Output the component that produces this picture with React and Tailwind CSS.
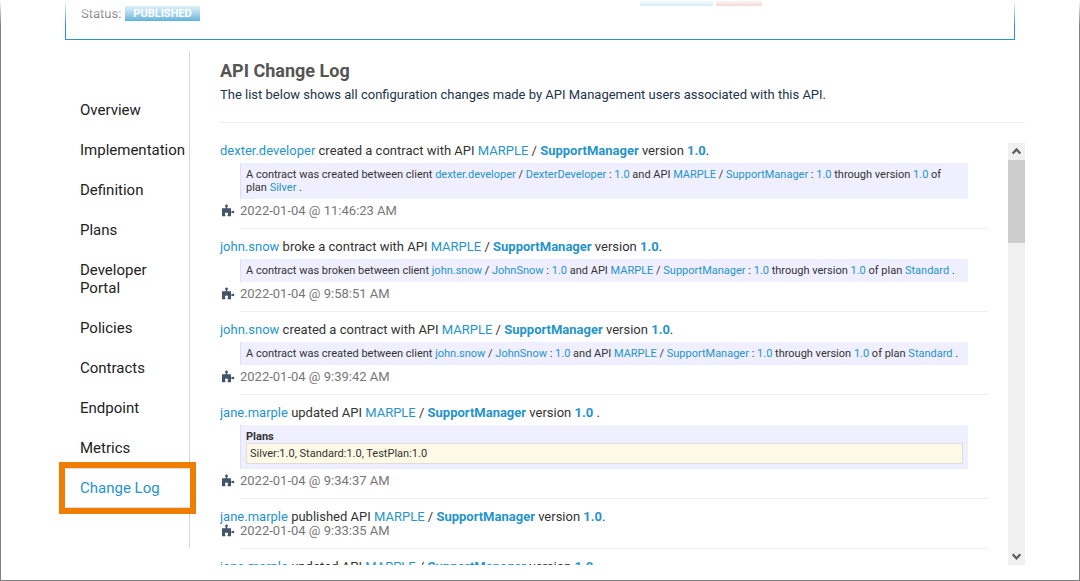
const navItems = [
  "Overview",
  "Implementation",
  "Definition",
  "Plans",
  "Developer Portal",
  "Policies",
  "Contracts",
  "Endpoint",
  "Metrics",
  "Change Log",
];

function Link({ children, bold }) {
  return (
    <a href="#" className={bold ? "font-bold text-[#2694ca]" : "text-[#2694ca]"}>
      {children}
    </a>
  );
}

function ContractDetail({ verb, user, client, plan }) {
  return (
    <p>
      A contract was {verb} between client <Link>{user}</Link> / <Link>{client}</Link> : <Link>1.0</Link> and API{" "}
      <Link>MARPLE</Link> / <Link>SupportManager</Link> : <Link>1.0</Link> through version <Link>1.0</Link> of plan{" "}
      <Link>{plan}</Link> .
    </p>
  );
}

function PlansDetail() {
  return (
    <div>
      <div className="font-bold">Plans</div>
      <div className="border border-[#dddddd] bg-[#fff9e6] p-[3px]">Silver:1.0, Standard:1.0, TestPlan:1.0</div>
    </div>
  );
}

const entries = [
  {
    user: "dexter.developer",
    action: "created a contract with API",
    end: ".",
    time: "2022-01-04 @ 11:46:23 AM",
    detail: <ContractDetail verb="created" user="dexter.developer" client="DexterDeveloper" plan="Silver" />,
  },
  {
    user: "john.snow",
    action: "broke a contract with API",
    end: ".",
    time: "2022-01-04 @ 9:58:51 AM",
    detail: <ContractDetail verb="broken" user="john.snow" client="JohnSnow" plan="Standard" />,
  },
  {
    user: "john.snow",
    action: "created a contract with API",
    end: ".",
    time: "2022-01-04 @ 9:39:42 AM",
    detail: <ContractDetail verb="created" user="john.snow" client="JohnSnow" plan="Standard" />,
  },
  {
    user: "jane.marple",
    action: "updated API",
    end: " .",
    time: "2022-01-04 @ 9:34:37 AM",
    detail: <PlansDetail />,
  },
  {
    user: "jane.marple",
    action: "published API",
    end: ".",
    time: "2022-01-04 @ 9:33:35 AM",
  },
  {
    user: "jane.marple",
    action: "updated API",
    end: " .",
  },
];

function PuzzleIcon() {
  return (
    <svg viewBox="0 0 13 14" className="h-[14px] w-[13px]" fill="#44546a" aria-hidden="true">
      <path d="M0 4.2H3.4C4 4.2 4 3.4 3.5 2.9C2.6 1.8 3.3 .6 4.5 .6S6.4 1.8 5.5 2.9C5 3.4 5 4.2 5.6 4.2H9V6.9C9 7.5 9.5 7.6 10 7.2C11 6.3 12.3 6.7 12.3 7.9S11 9.6 10 8.8C9.5 8.4 9 8.5 9 9.1V12.2H6.2C5.5 12.2 5.4 11.6 5.7 11C6.5 9.6 5.9 8.4 4.5 8.4S2.5 9.6 3.3 11C3.6 11.6 3.5 12.2 2.8 12.2H0Z" />
    </svg>
  );
}

function Entry({ user, action, end, time, detail }) {
  return (
    <li>
      <p className="text-[13px] leading-[14px] text-[#333333]">
        <Link>{user}</Link> {action} <Link>MARPLE</Link> / <Link bold>SupportManager</Link> version{" "}
        <Link bold>1.0</Link>
        {end}
      </p>
      {detail && (
        <div className="my-[5px] mr-5 ml-5 border-l border-[#ddddff] bg-[#efefff] p-[5px] text-[11px] leading-[13px] text-[#333333]">
          {detail}
        </div>
      )}
      {time && (
        <div className="flex items-center text-[13px] leading-[14px] text-[#777777]">
          <span className="flex w-5 pl-0.5">
            <PuzzleIcon />
          </span>
          <time>{time}</time>
        </div>
      )}
      <hr className="mt-[10px] mb-[11px] ml-5 border-[#eeeeee]" />
    </li>
  );
}

function Chevron({ down }) {
  return (
    <svg viewBox="0 0 17 17" className="size-[17px]" fill="none" stroke="#5c5c5c" strokeWidth="2.2">
      <path d={down ? "M4.7 6.2 8.5 10.4 12.3 6.2" : "M4.7 10.6 8.5 6.4 12.3 10.6"} />
    </svg>
  );
}

export default function App() {
  return (
    <div className="relative flex h-screen flex-col border-x border-b border-[#7f7f7f] bg-white pr-[54px] pb-[15px] pl-16 font-[Roboto,sans-serif]">
      <header className="mr-[10px] flex h-10 shrink-0 items-start justify-between border-x border-b border-[#2a93c9] pr-[252px] pl-[15px]">
        <div className="flex items-center gap-1 pt-[6px] text-[13px] leading-[15px] text-[#444444]">
          <span>Status:</span>
          <span className="bg-linear-to-b from-[#6fbce0] to-[#3a9fd3] px-2 text-[11px] font-bold text-white">
            PUBLISHED
          </span>
        </div>
        <div className="flex gap-[3px]">
          <button type="button" aria-label="New Version" className="h-[6px] w-[73px] bg-[#4aaad6]" />
          <button type="button" aria-label="Retire" className="h-[6px] w-[46px] bg-[#c44f4f]" />
        </div>
      </header>

      <div className="mt-[11px] flex min-h-0 flex-1">
        <nav className="mb-[17px] w-[125px] shrink-0 border-r border-[#d6d6d6] pt-[39px]">
          <ul>
            {navItems.map((item) => (
              <li key={item}>
                {item === "Change Log" ? (
                  <a
                    href="#"
                    aria-current="page"
                    className="relative -mr-px block border-y border-[#dddddd] bg-white py-[10px] pl-[15px] text-[15px] leading-[18px] text-[#2694ca] outline-6 outline-[#ef7d00]"
                  >
                    {item}
                  </a>
                ) : (
                  <a href="#" className="block py-[11px] pl-[15px] text-[15px] leading-[18px] text-[#222222]">
                    {item}
                  </a>
                )}
              </li>
            ))}
          </ul>
        </nav>

        <main className="ml-[30px] flex min-w-0 flex-1 flex-col">
          <h1 className="pt-[9px] text-[18px] leading-[22px] font-bold text-[#555555]">API Change Log</h1>
          <p className="mt-[5px] text-[13px] leading-4 text-[#24344a]">
            The list below shows all configuration changes made by API Management users associated with this API.
          </p>
          <hr className="mt-[19px] mb-5 border-[#eeeeee]" />
          <div className="flex min-h-0 flex-1">
            <ul className="min-w-0 flex-1 overflow-y-auto pt-px pr-5 [scrollbar-width:none]">
              {entries.map((entry, i) => (
                <Entry key={i} {...entry} />
              ))}
            </ul>
            <div className="flex w-[17px] shrink-0 flex-col justify-between bg-[#f0f0f0]">
              <div>
                <button type="button" aria-label="Scroll up" className="block">
                  <Chevron />
                </button>
                <div className="h-[83px] bg-[#cdcdcd]" />
              </div>
              <button type="button" aria-label="Scroll down" className="block">
                <Chevron down />
              </button>
            </div>
          </div>
        </main>
      </div>

      <div className="pointer-events-none absolute -inset-x-px top-0 h-[26px] bg-linear-to-b from-white to-white/0" />
    </div>
  );
}
